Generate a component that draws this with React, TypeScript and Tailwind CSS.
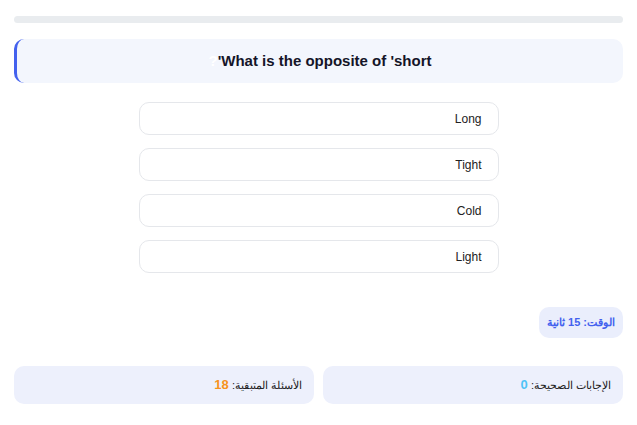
const OPTIONS = ["Long", "Tight", "Cold", "Light"];

export default function App() {
  return (
    <div
      dir="rtl"
      className="min-h-screen bg-white px-[14px] pt-[16px] text-[#1f2937]"
      style={{ fontFamily: '"Liberation Sans", Arial, sans-serif' }}
    >
      <div className="h-[7px] w-full rounded-full bg-[#e9ecef]" />

      <div className="mt-[16px] flex h-[44px] items-center justify-center rounded-[10px] border-r-0 border-l-[3px] border-[#4361ee] bg-[#f3f6fd]">
        <h2 className="text-[15px] font-bold text-[#141428]">
          What is the opposite of 'short'<span className="text-white">?</span>
        </h2>
      </div>

      <div className="mt-[19px] flex flex-col items-center gap-[13px]">
        {OPTIONS.map((opt) => (
          <button
            key={opt}
            type="button"
            className="flex h-[33px] w-[360px] items-center rounded-[10px] border border-[#e5e7eb] bg-white px-[16px] text-[12px] text-[#222]"
          >
            {opt}
          </button>
        ))}
      </div>

      <div className="mt-[34px] flex">
        <span className="flex h-[31px] items-center rounded-[10px] bg-[#eaeefc] px-[8px] text-[11px] font-bold text-[#4361ee]">
          الوقت: 15 ثانية
        </span>
      </div>

      <div className="mt-[28px] grid grid-cols-2 gap-[9px]">
        <div className="flex h-[38px] items-center rounded-[10px] bg-[#edf0fc] px-[12px] text-[11px] text-[#222]">
          الإجابات الصحيحة:&nbsp;<span className="text-[13px] font-bold text-[#4fc3f7]">0</span>
        </div>
        <div className="flex h-[38px] items-center rounded-[10px] bg-[#edf0fc] px-[12px] text-[11px] text-[#222]">
          الأسئلة المتبقية:&nbsp;<span className="text-[13px] font-bold text-[#f7931e]">18</span>
        </div>
      </div>
    </div>
  );
}
